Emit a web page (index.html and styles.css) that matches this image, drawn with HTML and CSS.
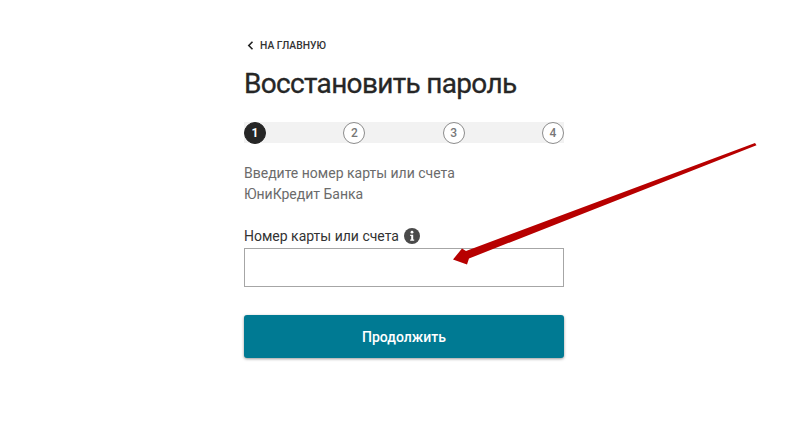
FILE: index.html
```html
<!DOCTYPE html>
<html lang="ru">
<head>
    <meta charset="UTF-8">
    <meta name="viewport" content="width=device-width, initial-scale=1.0">
    <title>Восстановить пароль</title>
    <link rel="stylesheet" href="styles.css">
</head>
<body>

    <div class="form-box">
        <a class="back-link" href="#">
            <svg class="back-icon" width="7" height="9" viewBox="0 0 7 9"><path d="M5.5 0.8 L1.8 4.5 L5.5 8.2" fill="none" stroke="#222" stroke-width="1.6"/></svg>
            НА ГЛАВНУЮ
        </a>

        <h1>Восстановить пароль</h1>

        <div class="steps">
            <div class="step active">1</div>
            <div class="step">2</div>
            <div class="step">3</div>
            <div class="step">4</div>
        </div>

        <p class="intro">Введите номер карты или счета<br>ЮниКредит Банка</p>

        <label class="field-label" for="card">
            Номер карты или счета
            <svg class="info-icon" width="16" height="16" viewBox="0 0 16 16">
                <circle cx="8" cy="8" r="8" fill="#4a4a4a"/>
                <circle cx="8" cy="4.2" r="1.4" fill="#fff"/>
                <path d="M6.2 6.7 H9.2 V11.4 H10.2 V12.8 H6.2 V11.4 H7.2 V8.1 H6.2 Z" fill="#fff"/>
            </svg>
        </label>
        <input class="field-input" id="card" type="text">

        <button class="submit-btn" type="button">Продолжить</button>
    </div>

    <!-- стрелка поверх формы -->
    <svg class="arrow" width="800" height="434" viewBox="0 0 800 434">
        <path d="M755 143 L756.5 145.2 L469 258.5 L467 264.5 L453 259.5 L462 248.5 L466 251 Z" fill="#b70000"/>
    </svg>

</body>
</html>
```

FILE: styles.css
```css
html, body {
    height: 100%;
}

body {
    font-family: Roboto, sans-serif;
    background: #fff;
    color: #262626;
    margin: 0;
    padding: 0;
    position: relative;
    overflow: hidden;
}

.form-box {
    width: 320px;
    margin-left: 244px;
    padding-top: 39px;
}

.back-link {
    display: flex;
    align-items: center;
    gap: 6px;
    height: 12px;
    padding-left: 3px;
    font-size: 10.3px;
    font-weight: 500;
    color: #333;
    text-decoration: none;
}

h1 {
    font-size: 28px;
    font-weight: 400;
    letter-spacing: -0.68px;
    line-height: 36px;
    margin: 15px 0 0;
    color: #262626;
    -webkit-text-stroke: 0.3px #262626;
}

.steps {
    display: flex;
    justify-content: space-between;
    height: 21px;
    margin-top: 20px;
    background: #f2f2f2;
}

.step {
    width: 20px;
    height: 20px;
    border: 1px solid #8c8c8c;
    border-radius: 50%;
    background: #fff;
    color: #777;
    font-size: 12px;
    font-weight: 500;
    line-height: 20px;
    text-align: center;
}

.step.active {
    background: #262626;
    border-color: #262626;
    color: #fff;
    font-weight: 700;
}

.intro {
    font-size: 14px;
    line-height: 21px;
    color: #6b6b6b;
    margin: 20px 0 0;
}

.field-label {
    display: flex;
    align-items: center;
    gap: 5px;
    font-size: 14px;
    line-height: 20px;
    color: #333;
    margin-top: 21px;
}

.field-input {
    display: block;
    box-sizing: border-box;
    width: 320px;
    height: 39px;
    margin-top: 2px;
    border: 1px solid #a6a6a6;
    border-radius: 0;
    background: #fff;
    outline: none;
}

.submit-btn {
    display: block;
    width: 320px;
    height: 43px;
    margin-top: 28px;
    border: none;
    border-radius: 3px;
    background: #007a93;
    color: #fff;
    font-family: inherit;
    font-size: 14px;
    font-weight: 500;
    box-shadow: 0 1px 3px rgba(0, 0, 0, 0.4);
}

.arrow {
    position: absolute;
    left: 0;
    top: 0;
    pointer-events: none;
}
```
